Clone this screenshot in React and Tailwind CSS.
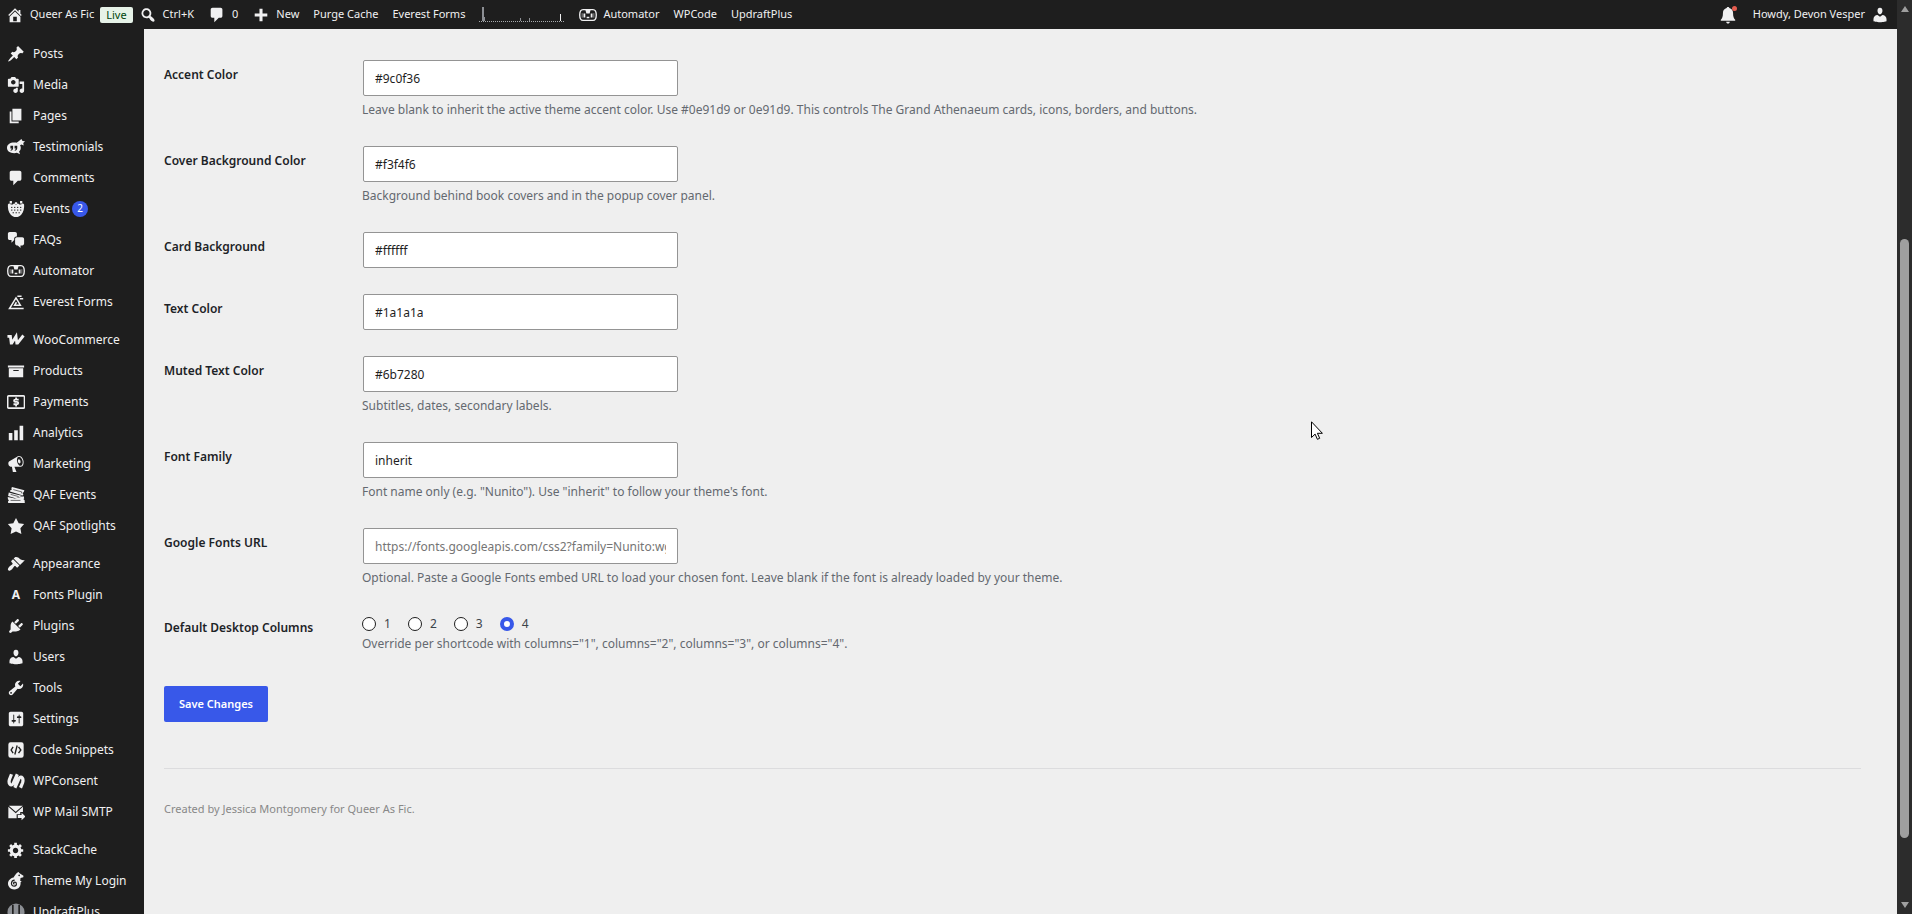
import React from 'react';

const paths = {
  home: 'M16 8.5l1.53 1.53-1.06 1.06L10 4.6l-6.47 6.49-1.06-1.06L10 2.5l4 4v-2h2v4zm-6-2.46l6 5.99V18H4v-5.97zM12 17v-5H8v5h4z',
  search: 'M12.14 4.18c1.87 1.87 2.11 4.75.72 6.89.12.1.22.21.36.31.2.16.47.36.81.59.34.24.56.39.66.47.42.31.73.57.94.78.32.32.6.65.84 1 .25.35.44.69.59 1.04.14.35.21.68.18 1-.02.32-.14.59-.36.81s-.49.34-.81.36c-.31.02-.65-.04-.99-.19-.35-.14-.7-.34-1.04-.59-.35-.24-.68-.52-1-.84-.21-.21-.47-.52-.77-.93-.1-.13-.25-.35-.47-.66-.22-.32-.4-.57-.56-.78-.16-.2-.29-.35-.44-.5-2.07 1.09-4.69.76-6.44-.98-2.14-2.15-2.14-5.64 0-7.78 2.15-2.15 5.63-2.15 7.78 0zm-1.41 6.36c1.36-1.37 1.36-3.58 0-4.95-1.37-1.37-3.59-1.37-4.95 0-1.37 1.37-1.37 3.58 0 4.95 1.36 1.37 3.58 1.37 4.95 0z',
  plus: 'M8.3 3h3.4v5.3H17v3.4h-5.3V17H8.3v-5.3H3V8.3h5.3z',
  bell: 'M10 1c.8 0 1.4.5 1.5 1.2 2.5.6 4.1 2.6 4.1 5.2 0 4.6.9 6.4 2.4 7.8v1.3H2v-1.3c1.5-1.4 2.4-3.2 2.4-7.8 0-2.6 1.6-4.6 4.1-5.2C8.6 1.5 9.2 1 10 1zM8 17.5h4c0 1.1-.9 2-2 2s-2-.9-2-2z',
  posts: 'M10.44 3.02l1.82-1.82 6.36 6.35-1.83 1.82c-1.05-.68-2.48-.57-3.41.36l-.75.75c-.92.93-1.04 2.35-.35 3.41l-1.83 1.82-2.41-2.41-2.8 2.79c-.42.42-3.38 2.71-3.8 2.29s1.86-3.39 2.28-3.81l2.79-2.79L4.1 9.36l1.83-1.82c1.05.69 2.48.57 3.4-.36l.75-.75c.93-.92 1.05-2.35.36-3.41z',
  media: 'M13 11V4c0-.55-.45-1-1-1h-1.67L9 1H5L3.67 3H2c-.55 0-1 .45-1 1v7c0 .55.45 1 1 1h10c.55 0 1-.45 1-1zM7 4.5c1.38 0 2.5 1.12 2.5 2.5S8.38 9.5 7 9.5 4.5 8.38 4.5 7 5.62 4.5 7 4.5zM14 6h5v10.5c0 1.38-1.12 2.5-2.5 2.5S14 17.88 14 16.5s1.12-2.5 2.5-2.5c.17 0 .34.02.5.05V9h-3V6zm-4 8.05V13h2v3.5c0 1.38-1.12 2.5-2.5 2.5S7 17.88 7 16.5 8.12 14 9.5 14c.17 0 .34.02.5.05z',
  pages: 'M6 15V2h10v13H6zm-1 1h8v2H3V5h2v11z',
  comments: 'M5 2h9c1.1 0 2 .9 2 2v7c0 1.1-.9 2-2 2h-2l-5 5v-5H5c-1.1 0-2-.9-2-2V4c0-1.1.9-2 2-2z',
  faqs: 'M11 6h-.82C9.07 6 8 7.2 8 8.16V10l-3 3v-3H3c-1.1 0-2-.9-2-2V3c0-1.1.9-2 2-2h6c1.1 0 2 .9 2 2v3zm0 1h6c1.1 0 2 .9 2 2v5c0 1.1-.9 2-2 2h-2v3l-3-3h-1c-1.1 0-2-.9-2-2V9c0-1.1.9-2 2-2z',
  products: 'M19 4v2H1V4h18zM2 7h16v10H2V7zm11 3V9H7v1h6z',
  analytics: 'M18 18V2h-4v16h4zm-6 0V7H8v11h4zm-6 0v-8H2v8h4z',
  marketing: 'M18.15 5.94c.46 1.62.38 3.22-.02 4.48-.42 1.28-1.26 2.18-2.3 2.48-.16.06-.26.06-.4.06-.06.02-.12.02-.18.02-.06.02-.14.02-.22.02h-6.8l2.22 5.5c.02.14-.06.26-.14.34-.08.1-.24.16-.34.16H6.95c-.1 0-.26-.06-.34-.16-.08-.08-.16-.2-.14-.34l-1-5.5H4.25l-.02-.02c-.5.06-1.08-.18-1.54-.62s-.88-1.08-1.06-1.88c-.24-.8-.2-1.56-.02-2.2.18-.62.58-1.08 1.06-1.3l.02-.02 9-5.4c.1-.06.18-.1.24-.16.06-.04.14-.08.24-.12.16-.08.28-.12.5-.18 1.04-.3 2.24.1 3.22.98s1.84 2.24 2.26 3.86zm-2.58 5.98h-.02c.4-.1.74-.34 1.04-.7.58-.7.86-1.76.86-3.04 0-.64-.1-1.3-.28-1.98-.34-1.36-1.02-2.5-1.78-3.24s-1.68-1.1-2.46-.88c-.82.22-1.4.96-1.7 2-.32 1.04-.28 2.36.06 3.72.38 1.36 1 2.5 1.8 3.24.78.74 1.62 1.1 2.48.88zm-2.54-7.08c.22-.04.42-.02.62.04.38.16.76.48 1.02 1s.42 1.2.42 1.78c0 .3-.04.56-.12.8-.18.48-.44.84-.86.94-.34.1-.8-.06-1.14-.4s-.64-.86-.78-1.5c-.18-.62-.12-1.24.02-1.72s.48-.84.82-.94z',
  star: 'M10 1l3 6 6 .75-4.12 4.62L16 19l-6-3-6 3 1.13-6.63L1 7.75 7 7z',
  appearance: 'M14.48 11.06L7.41 3.99l1.5-1.5c.5-.56 2.3-.47 3.51.32 1.21.8 1.43 1.28 2.91 2.1 1.18.64 2.45 1.26 4.45.85zm-.71.71L6.7 4.7 4.93 6.47c-.39.39-.39 1.02 0 1.41l1.06 1.06c.39.39.39 1.03 0 1.42-.6.6-1.43 1.11-2.21 1.69-.35.26-.7.53-1.01.84C1.43 14.23.4 16.08 1.4 17.07c.99 1 2.84-.03 4.18-1.36.31-.31.58-.66.85-1.02.57-.78 1.08-1.61 1.69-2.21.39-.39 1.02-.39 1.41 0l1.06 1.06c.39.39 1.02.39 1.41 0z',
  plugins: 'M13.11 4.36L9.87 7.6 8 5.73l3.24-3.24c.35-.34 1.05-.2 1.56.32.52.51.66 1.21.31 1.55zm-8 1.77l.91-1.12 9.01 9.01-1.19.84c-.71.71-2.63 1.16-3.82 1.16H6.14L4.9 17.26c-.59.59-1.54.59-2.12 0-.59-.58-.59-1.53 0-2.12l1.24-1.24v-3.88c0-1.13.4-3.19 1.09-3.89zm7.26 3.97l3.24-3.24c.34-.35 1.04-.21 1.55.31.52.51.66 1.21.31 1.55l-3.24 3.25z',
  users: 'M10 9.25c-2.27 0-2.73-3.44-2.73-3.44C7 4.02 7.82 2 9.97 2c2.16 0 2.98 2.02 2.71 3.81 0 0-.41 3.44-2.68 3.44zm0 2.57L12.72 10c2.39 0 4.52 2.33 4.52 4.53v2.49s-3.65 1.13-7.24 1.13c-3.65 0-7.24-1.13-7.24-1.13v-2.49c0-2.25 1.94-4.48 4.47-4.48z',
  tools: 'M16.68 9.77c-1.34 1.34-3.3 1.67-4.95.99l-5.41 6.52c-.99.99-2.59.99-3.58 0s-.99-2.59 0-3.57l6.52-5.42c-.68-1.65-.35-3.61.99-4.95 1.28-1.28 3.12-1.62 4.72-1.06l-2.89 2.89 2.82 2.82 2.86-2.87c.53 1.58.18 3.39-1.08 4.65zM3.81 16.21c.4.39 1.04.39 1.43 0 .4-.4.4-1.04 0-1.43-.39-.4-1.03-.4-1.43 0-.39.39-.39 1.03 0 1.43z',
  settings: 'M18 16V4c0-1.1-.9-2-2-2H4c-1.1 0-2 .9-2 2v12c0 1.1.9 2 2 2h12c1.1 0 2-.9 2-2zM8 11h1c.55 0 1 .45 1 1s-.45 1-1 1H8v1.5c0 .28-.22.5-.5.5s-.5-.22-.5-.5V13H6c-.55 0-1-.45-1-1s.45-1 1-1h1V5.5c0-.28.22-.5.5-.5s.5.22.5.5V11zm5-2h-1c-.55 0-1-.45-1-1s.45-1 1-1h1V5.5c0-.28.22-.5.5-.5s.5.22.5.5V7h1c.55 0 1 .45 1 1s-.45 1-1 1h-1v5.5c0 .28-.22.5-.5.5s-.5-.22-.5-.5V9z',
  gear: 'M18 12h-2.18c-.17.7-.44 1.35-.81 1.93l1.54 1.54-2.1 2.1-1.54-1.54c-.58.36-1.23.63-1.91.79V19H8v-2.18c-.68-.16-1.33-.43-1.91-.79l-1.54 1.54-2.12-2.12 1.54-1.54c-.36-.58-.63-1.23-.79-1.91H1V9.03h2.17c.16-.7.44-1.35.8-1.94L2.43 5.55l2.1-2.1 1.54 1.54c.58-.37 1.24-.64 1.93-.81V2h3v2.18c.68.16 1.33.43 1.91.79l1.54-1.54 2.12 2.12-1.54 1.54c.36.59.64 1.24.8 1.94H18V12zm-8.5 1.5c1.66 0 3-1.34 3-3s-1.34-3-3-3-3 1.34-3 3 1.34 3 3 3z',
};

const drawings = {
  testimonials: (
    <>
      <path fillRule="evenodd" d="M8 5c4.2 0 7.3 2.2 7.3 5.8 0 1.8-.7 3.200-1.900 4.200l1.100 3-3.500-1.500c-.9.3-1.900.4-3 .4C3.300 16.900 0 14.500 0 10.900S3.300 5 8 5zM3.800 8.600v3.200h1.400c0 .8-.5 1.300-1.200 1.500v.9c1.700-.2 2.800-1.300 2.800-3.100V8.600zm4.600 0v3.200h1.400c0 .8-.5 1.300-1.200 1.500v.9c1.700-.2 2.800-1.300 2.800-3.100V8.600z" />
      <path d="M16 1l1.300 2.200 2.700.4-1.900 2 .4 2.800-2.500-1.200-2 1-1.700-2.200-1.600-.6 2.600-2.200z" />
    </>
  ),
  events: (
    <>
      <path d="M3 1h2.500v3H3zM14.500 1H17v3h-2.500zM8.800 2.500h2.400v2H8.800z" />
      <path d="M1 5c1-1.600 2.200-1.300 3.300 0h2.200c1-1.400 2-1.400 3 0h1c1-1.400 2-1.400 3 0h2.200c1.100-1.300 2.300-1.600 3.300 0 .3 3.600-.5 8.600-3.200 11.400C14 18.200 12.500 19 10 19s-4-.8-5.800-2.600C1.500 13.600.7 8.600 1 5z" />
      <path stroke="#1e1e1e" strokeWidth="1.100" strokeDasharray="1.500 1.800" d="M4.500 8.200h11.600M4.500 11.200h11.600M6.200 14.200h8" />
    </>
  ),
  automator: (
    <>
      <path fill="none" stroke="currentColor" strokeWidth="1.500" d="M4.500 4h11C18.300 4 19.200 6.500 19.200 10s-.9 6-3.700 6h-11C1.700 16 .8 13.500 .8 10s.9-6 3.700-6z" />
      <path d="M7 4h6l-1.200 4.200H8.200zM5 8.300h2v4.400H5zM13 8.300h2v4.400h-2zM8.500 12h3v1.500h-3z" />
      <path fill="none" stroke="currentColor" strokeWidth=".6" d="M3.500 8v5M16.500 8v5" />
    </>
  ),
  everest: (
    <path fill="none" stroke="currentColor" strokeWidth="1.700" d="M18.500 17.200H2.800L10 5.500l4.800 8H8.500l2-3.200M11.500 3.500h4.700M14.300 6.500h3.700" />
  ),
  woo: <path fill="none" stroke="currentColor" strokeWidth="3.200" d="M.5 6h3.300l.9 7.500h.6L10 6l.9 7.500h.8L18.300 5" />,
  payments: (
    <>
      <path fill="none" stroke="currentColor" strokeWidth="1.700" d="M1.800 3.200h16.600a1 1 0 0 1 1 1v11.600a1 1 0 0 1-1 1H1.800a1 1 0 0 1-1-1V4.200a1 1 0 0 1 1-1z" />
      <path fill="none" stroke="currentColor" strokeWidth="2" d="M13 7.300H9.200c-1.800 0-1.800 2.500 0 2.500h1.800c2 0 2 2.700 0 2.700H7.200M10.100 5v2M10.100 12.500V15" />
    </>
  ),
  tickets: (
    <>
      <path d="M5.500 1l13.800 3.700-.8 2.200c-1.200 0-1.500 1.700-.4 2.300l-.3 1.300L3.300 6.200l.6-1.700c1.200.2 1.800-1 .9-1.800z" />
      <path d="M2 7.200l4 1 11.500 3-8 2.300L1.300 11z" />
      <path d="M.8 12.200l8 1.800 9.700-2.700.6 2.200c-1 .5-.8 1.900.4 2.100l.3 3.400H1.300l-.2-2c1.200-.3 1.200-1.800 0-2.100z" />
      <path fill="none" stroke="#1e1e1e" strokeWidth=".7" d="M7 4l9.500 2.600-.5 1.600M4 9.300l9 2.500M4 16h11" />
    </>
  ),
  code: (
    <>
      <path d="M4 1.500h12A2.500 2.500 0 0 1 18.500 4v12a2.500 2.500 0 0 1-2.500 2.500H4A2.500 2.500 0 0 1 1.500 16V4A2.500 2.500 0 0 1 4 1.500z" />
      <path fill="none" stroke="#1e1e1e" strokeWidth="1.500" d="M6.800 6.500L4.600 10l2.200 3.500M11.300 5l-2.600 10M12.800 6.500L15.400 10l-2.600 3.500" />
    </>
  ),
  consent: (
    <path fill="none" stroke="currentColor" strokeWidth="3.600" d="M5 2.500L2.800 8c-1.600 5 1.400 8 4 5L11.500 2.500M8.700 17.500L13.400 7c2.600-3 5.400 0 3.900 5L15 17.500" />
  ),
  mail: (
    <>
      <path d="M2 3h15.500l-7.800 6.600zM1.500 4.300l8.200 7 8-7V10h-3v2.500h-4V17H1.500z" />
      <path d="M12 13.300h4.200v-2.600l4.300 4.300-4.300 4.300v-2.600H12z" />
    </>
  ),
  chameleon: (
    <>
      <path d="M13 0c.2 1.300 3 2.600 5.300 4.200l-.2 1.600-3.200.9c.3 1.200.1 1.900-.6 2.700l2 1-1.200 1c.4 4.300-2 8-7 8-4 0-7-2.700-7-6.500 0-3.600 2.600-6.200 6.200-6.900C9 3.500 10.200.8 13 0z" />
      <path fill="none" stroke="#1e1e1e" strokeWidth="1.300" d="M8.400 13.300c-1.700.2-1.500-2 .2-2 2.300 0 2.800 4.200-.4 4.400-4.600.1-4.200-6.300.3-6.700" />
      <circle cx="13.500" cy="3.800" r=".9" fill="#1e1e1e" />
    </>
  ),
  updraft: (
    <>
      <circle cx="10" cy="10" r="9.500" fill="#8c8f94" />
      <path fill="none" stroke="#1e1e1e" strokeWidth="1.800" d="M6.500 2v16M13.500 2v16" />
    </>
  ),
};

const Icon = ({ name }) => (
  <svg viewBox="0 0 20 20" fill="currentColor" aria-hidden="true" className="size-[18px] shrink-0 text-[#f0f0f1]">
    {paths[name] ? <path fillRule="evenodd" d={paths[name]} /> : drawings[name]}
  </svg>
);

const menuGroups = [
  [
    ['posts', 'Posts'],
    ['media', 'Media'],
    ['pages', 'Pages'],
    ['testimonials', 'Testimonials'],
    ['comments', 'Comments'],
    ['events', 'Events', 2],
    ['faqs', 'FAQs'],
    ['automator', 'Automator'],
    ['everest', 'Everest Forms'],
  ],
  [
    ['woo', 'WooCommerce'],
    ['products', 'Products'],
    ['payments', 'Payments'],
    ['analytics', 'Analytics'],
    ['marketing', 'Marketing'],
    ['tickets', 'QAF Events'],
    ['star', 'QAF Spotlights'],
  ],
  [
    ['appearance', 'Appearance'],
    ['letter', 'Fonts Plugin'],
    ['plugins', 'Plugins'],
    ['users', 'Users'],
    ['tools', 'Tools'],
    ['settings', 'Settings'],
    ['code', 'Code Snippets'],
    ['consent', 'WPConsent'],
    ['mail', 'WP Mail SMTP'],
  ],
  [
    ['gear', 'StackCache'],
    ['chameleon', 'Theme My Login'],
    ['updraft', 'UpdraftPlus'],
  ],
];

const fields = [
  { id: 'accent', label: 'Accent Color', value: '#9c0f36', help: 'Leave blank to inherit the active theme accent color. Use #0e91d9 or 0e91d9. This controls The Grand Athenaeum cards, icons, borders, and buttons.' },
  { id: 'cover-bg', label: 'Cover Background Color', value: '#f3f4f6', help: 'Background behind book covers and in the popup cover panel.' },
  { id: 'card-bg', label: 'Card Background', value: '#ffffff' },
  { id: 'text', label: 'Text Color', value: '#1a1a1a' },
  { id: 'muted', label: 'Muted Text Color', value: '#6b7280', help: 'Subtitles, dates, secondary labels.' },
  { id: 'font', label: 'Font Family', value: 'inherit', help: 'Font name only (e.g. "Nunito"). Use "inherit" to follow your theme\'s font.' },
  { id: 'font-url', label: 'Google Fonts URL', value: '', placeholder: 'https://fonts.googleapis.com/css2?family=Nunito:wght@400;700', help: 'Optional. Paste a Google Fonts embed URL to load your chosen font. Leave blank if the font is already loaded by your theme.' },
];

const BarLink = ({ icon, children, className = '' }) => (
  <a href="#" className={`flex items-center gap-1.5 whitespace-nowrap ${className}`}>
    {icon && <Icon name={icon} />}
    {children}
  </a>
);

const AdminBar = () => (
  <header className="flex h-[29px] shrink-0 items-center bg-[#1e1e1e] pr-2 pl-1.5 text-[11px] text-[#f0f0f1]">
    <nav className="flex items-center gap-3.5">
      <BarLink icon="home" className="-mr-2">
        Queer As Fic
        <span className="rounded-xs bg-[#e6f2e8] px-1.5 leading-4 text-[#00450c]">Live</span>
      </BarLink>
      <BarLink icon="search">Ctrl+K</BarLink>
      <BarLink icon="comments">0</BarLink>
      <BarLink icon="plus">New</BarLink>
      <BarLink>Purge Cache</BarLink>
      <BarLink>Everest Forms</BarLink>
      <svg viewBox="0 0 86 17" className="h-[17px] w-[86px]" aria-hidden="true">
        <path stroke="#a7aaad" strokeDasharray="1 1" d="M0 15.500h86" />
        <path fill="#8c8f94" d="M3 1h2v14H3zM5 11h1v4H5zM41 12h1v3h-1zM50 12h1v3h-1z" />
        <path fill="#f0f0f1" d="M81 8h1v7h-1z" />
      </svg>
      <BarLink icon="automator">Automator</BarLink>
      <BarLink>WPCode</BarLink>
      <BarLink>UpdraftPlus</BarLink>
    </nav>
    <div className="ml-auto flex items-center gap-4">
      <button type="button" aria-label="Notifications" className="relative">
        <Icon name="bell" />
        <span className="absolute top-0 right-0 size-[5px] rounded-full bg-[#e65c4f]" />
      </button>
      <BarLink>
        Howdy, Devon Vesper
        <Icon name="users" />
      </BarLink>
    </div>
  </header>
);

const Sidebar = () => (
  <nav className="flex w-36 shrink-0 flex-col gap-[7px] overflow-hidden bg-[#1e1e1e] pt-[9px] text-[12px] text-[#f0f0f1]">
    {menuGroups.map((group, i) => (
      <ul key={i}>
        {group.map(([icon, label, count]) => (
          <li key={label}>
            <a href="#" className="flex h-[31px] items-center gap-2 pl-[7px] whitespace-nowrap">
              {icon === 'letter' ? (
                <span className="w-[18px] text-center font-bold">A</span>
              ) : (
                <Icon name={icon} />
              )}
              <span>{label}</span>
              {count && (
                <span className="-ml-1.5 flex size-4 items-center justify-center rounded-full bg-[#3858e9] text-[10px] text-white">
                  {count}
                </span>
              )}
            </a>
          </li>
        ))}
      </ul>
    ))}
  </nav>
);

const Help = ({ children }) => <p className="leading-5 text-[#646970]">{children}</p>;

const SettingsForm = () => (
  <form className="text-[12px]">
    {fields.map((f) => (
      <div key={f.id} className="flex pb-[26px]">
        <label htmlFor={f.id} className="w-[198px] shrink-0 pt-[5px] leading-5 font-semibold text-[#1d2327]">
          {f.label}
        </label>
        <div className="flex flex-col gap-1">
          <input
            id={f.id}
            type="text"
            defaultValue={f.value}
            placeholder={f.placeholder}
            className="ml-px block h-9 w-[315px] rounded-xs border border-[#949494] bg-white px-[11px] text-[#1e1e1e] placeholder:text-[#757575]"
          />
          {f.help && <Help>{f.help}</Help>}
        </div>
      </div>
    ))}
    <fieldset className="flex">
      <legend className="float-left w-[198px] shrink-0 pt-1 leading-5 font-semibold text-[#1d2327]">
        Default Desktop Columns
      </legend>
      <div>
        <div className="flex gap-[17px]">
          {[1, 2, 3, 4].map((n) => (
            <label key={n} className="flex items-center gap-2 leading-5 text-[#3c434a]">
              <input
                type="radio"
                name="columns"
                value={n}
                defaultChecked={n === 4}
                className="size-3.5 appearance-none rounded-full border border-[#1e1e1e] bg-white checked:border-4 checked:border-[#3858e9]"
              />
              {n}
            </label>
          ))}
        </div>
        <Help>Override per shortcode with columns="1", columns="2", columns="3", or columns="4".</Help>
      </div>
    </fieldset>
    <button type="submit" className="mt-8 h-9 rounded-xs bg-[#3858e9] px-[15px] text-[11px] font-semibold text-white">
      Save Changes
    </button>
  </form>
);

const Scrollbar = () => (
  <div className="flex w-[15px] shrink-0 flex-col items-center bg-[#2c2c2c] py-1.5" aria-hidden="true">
    <svg viewBox="0 0 8 6" className="h-1.5 w-2" fill="#9f9f9f">
      <path d="M4 0l4 6H0z" />
    </svg>
    <div className="grow-[227]" />
    <div className="w-[9px] grow-[599] rounded-full bg-[#9f9f9f]" />
    <div className="grow-[64]" />
    <svg viewBox="0 0 8 6" className="h-1.5 w-2" fill="#9f9f9f">
      <path d="M4 6l4-6H0z" />
    </svg>
  </div>
);

const App = () => {
  return (
    <div className="flex h-screen overflow-hidden bg-[#efefef] font-['Noto_Sans',sans-serif]">
      <div className="flex min-w-0 grow flex-col">
        <AdminBar />
        <div className="flex min-h-0 grow">
          <Sidebar />
          <main className="min-w-0 grow pt-[31px] pr-9 pl-5">
            <SettingsForm />
            <footer className="mt-[46px] border-t border-[#dcdcde] pt-[30px] text-[11px] leading-5 text-[#888888]">
              Created by Jessica Montgomery for Queer As Fic.
            </footer>
          </main>
        </div>
      </div>
      <Scrollbar />
      <svg viewBox="0 0 12 19" className="absolute top-[421px] left-[1311px] h-[19px] w-3" aria-hidden="true">
        <path fill="#fff" stroke="#000" d="M.5.8v15.700l3.600-3.400 2.300 5.200 2.300-1-2.300-5h5z" />
      </svg>
    </div>
  );
};

export default App;
